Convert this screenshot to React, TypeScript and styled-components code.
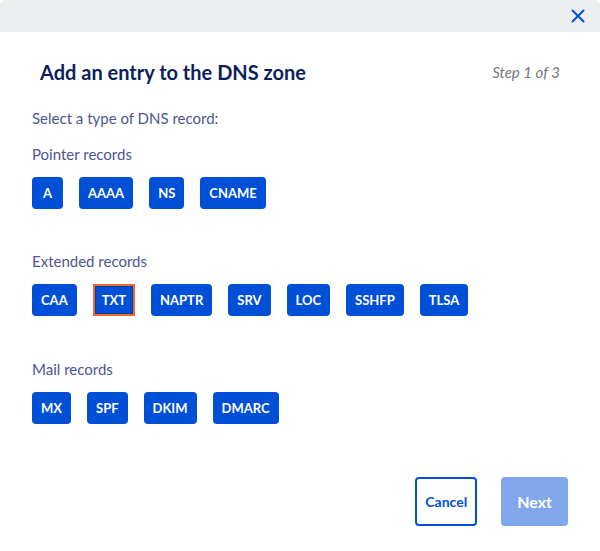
import styled, { createGlobalStyle } from "styled-components";

const GlobalStyle = createGlobalStyle`
  html, body {
    margin: 0;
    padding: 0;
    background: #ffffff;
  }
  body {
    font-family: Lato, "Open Sans", sans-serif;
  }
`;

const Modal = styled.div`
  width: 600px;
  height: 551px;
  background: #fff;
  border-radius: 6px;
  overflow: hidden;
  display: flex;
  flex-direction: column;
  box-sizing: border-box;
`;

const Header = styled.div`
  height: 32px;
  flex-shrink: 0;
  background: #ebeeee;
  display: flex;
  justify-content: flex-end;
  align-items: center;
  padding-right: 14px;
`;

const CloseButton = styled.button`
  border: 0;
  background: transparent;
  padding: 0;
  width: 16px;
  height: 16px;
  display: flex;
  align-items: center;
  justify-content: center;
  cursor: pointer;
`;

const Body = styled.div`
  flex: 1;
  padding: 0 32px;
  display: flex;
  flex-direction: column;
`;

const TitleRow = styled.div`
  display: flex;
  justify-content: space-between;
  align-items: center;
  padding: 26px 8px 0;
  height: 28px;
  box-sizing: content-box;
`;

const Title = styled.h2`
  margin: 0;
  font-size: 20px;
  line-height: 28px;
  font-weight: 700;
  color: #0b1f5c;
`;

const Step = styled.span`
  font-size: 15px;
  font-style: italic;
  color: #757780;
`;

const Text = styled.p<{ $top: number }>`
  margin: ${(p) => p.$top}px 0 0;
  font-size: 15px;
  line-height: 20px;
  color: #4d5592;
`;

const ButtonRow = styled.div`
  display: flex;
  gap: 16px;
  margin-top: 13px;
`;

const RecordButton = styled.button<{ $focused?: boolean }>`
  height: 32px;
  min-width: 31px;
  padding: 0 9px;
  border: 0;
  border-radius: 4px;
  background: #0050d7;
  color: #fff;
  font-family: Lato, "Open Sans", sans-serif;
  font-size: 13px;
  font-weight: 700;
  cursor: pointer;
  ${(p) =>
    p.$focused &&
    `
    border-radius: 0;
    border: 2px solid #f0682a;
    box-shadow: inset 0 0 0 1px #003ea8;
    padding: 0 7px;
  `}
`;

const Footer = styled.div`
  display: flex;
  justify-content: flex-end;
  gap: 24px;
  padding: 0 32px 25px;
`;

const FooterButton = styled.button<{ $variant: "ghost" | "primary" }>`
  height: 49px;
  border-radius: 4px;
  font-family: Lato, "Open Sans", sans-serif;
  font-weight: 700;
  cursor: pointer;
  box-sizing: border-box;
  ${(p) =>
    p.$variant === "ghost"
      ? `
    background: #fff;
    border: 2px solid #0050d7;
    color: #0050d7;
    font-size: 14px;
    padding: 0 8px;
  `
      : `
    background: #80a7eb;
    border: 0;
    color: #fff;
    font-size: 16px;
    padding: 0 16px;
  `}
`;

const groups = [
  { label: "Pointer records", top: 16, items: ["A", "AAAA", "NS", "CNAME"] },
  {
    label: "Extended records",
    top: 42,
    items: ["CAA", "TXT", "NAPTR", "SRV", "LOC", "SSHFP", "TLSA"],
  },
  { label: "Mail records", top: 43, items: ["MX", "SPF", "DKIM", "DMARC"] },
];

export default function App() {
  return (
    <>
      <GlobalStyle />
      <Modal>
        <Header>
          <CloseButton aria-label="Close">
            <svg width="14" height="14" viewBox="0 0 14 14">
              <path
                d="M1.5 1.5 L12.5 12.5 M12.5 1.5 L1.5 12.5"
                stroke="#0050d7"
                strokeWidth="2"
                strokeLinecap="round"
              />
            </svg>
          </CloseButton>
        </Header>
        <Body>
          <TitleRow>
            <Title>Add an entry to the DNS zone</Title>
            <Step>Step 1 of 3</Step>
          </TitleRow>
          <Text $top={22}>Select a type of DNS record:</Text>
          {groups.map((g) => (
            <div key={g.label}>
              <Text $top={g.top}>{g.label}</Text>
              <ButtonRow>
                {g.items.map((it) => (
                  <RecordButton key={it} $focused={it === "TXT"}>
                    {it}
                  </RecordButton>
                ))}
              </ButtonRow>
            </div>
          ))}
        </Body>
        <Footer>
          <FooterButton $variant="ghost">Cancel</FooterButton>
          <FooterButton $variant="primary">Next</FooterButton>
        </Footer>
      </Modal>
    </>
  );
}
